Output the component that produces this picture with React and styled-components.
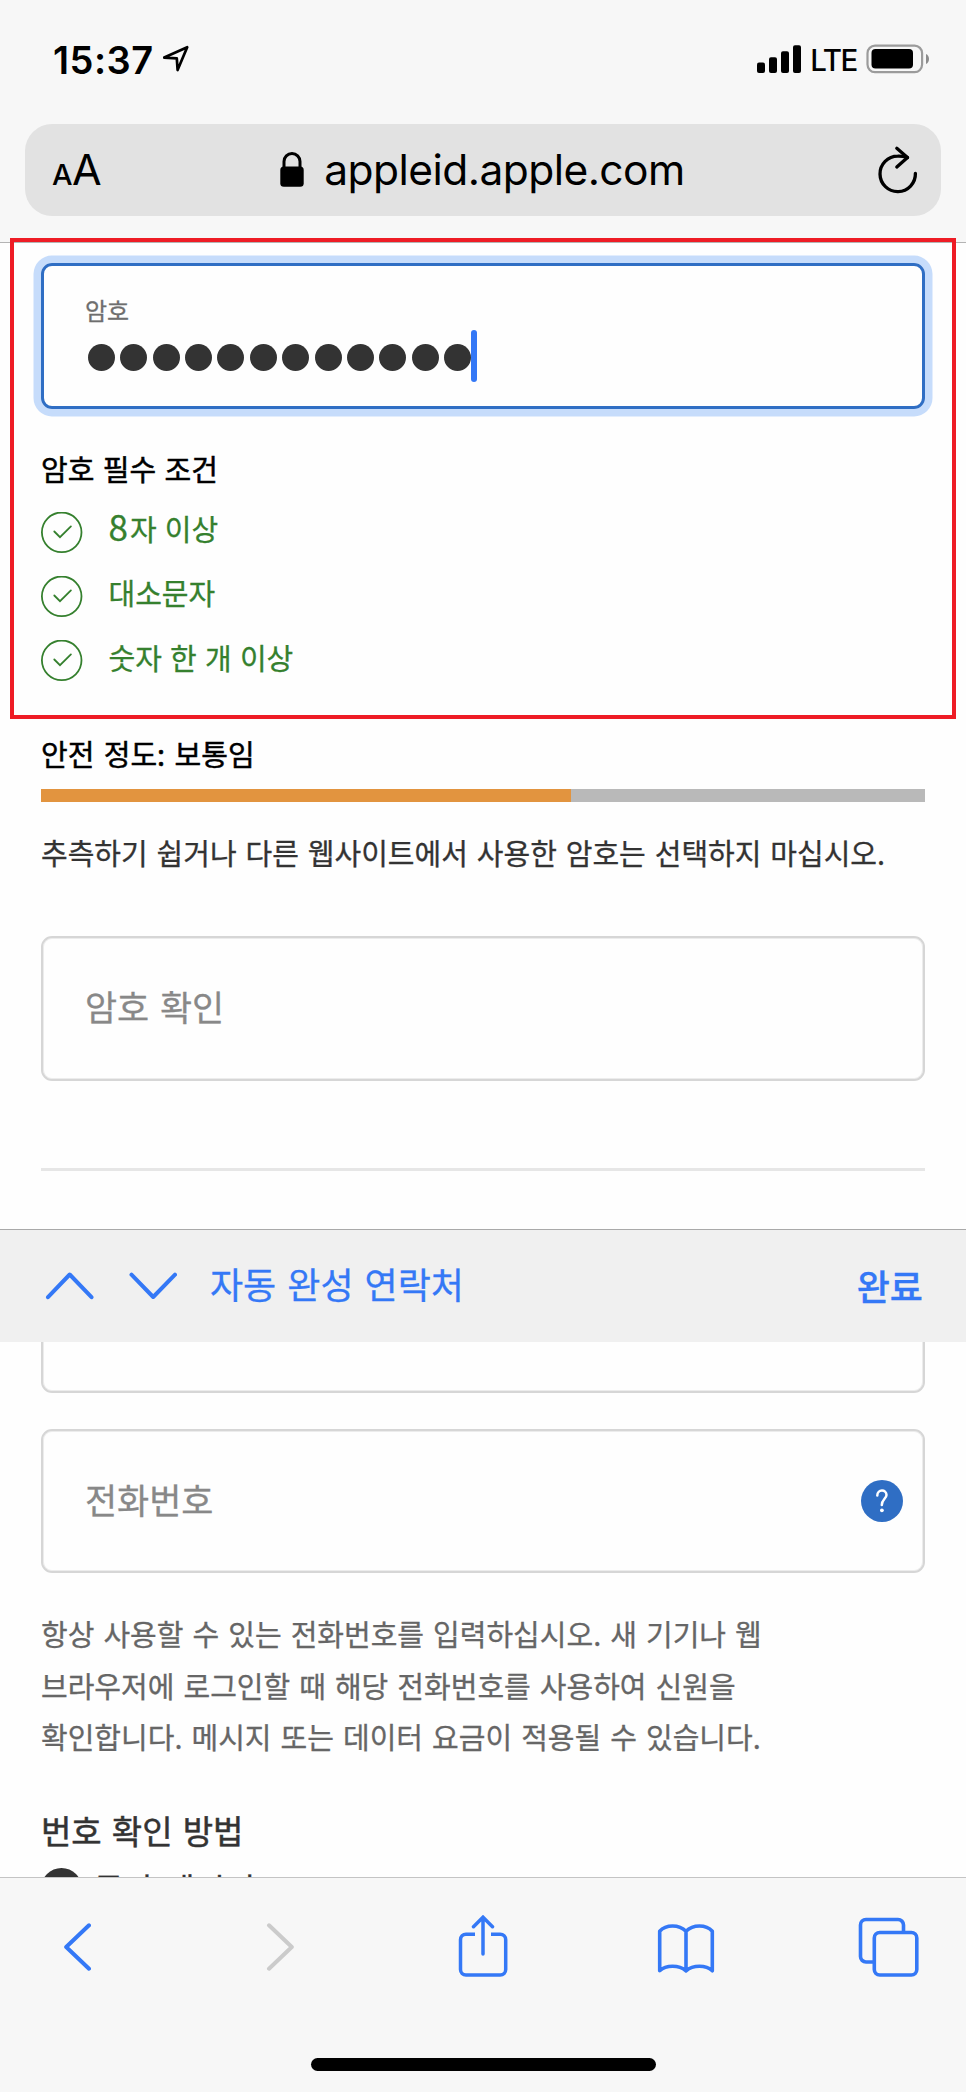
import React from 'react';
import styled, { createGlobalStyle } from 'styled-components';

const blue = '#3478f6';
const fieldBlue = '#2f6ec4';
const green = '#35802e';

const requirements = [
    { id: 'length', digit: '8', text: '자 이상' },
    { id: 'case', text: '대소문자' },
    { id: 'number', text: '숫자 한 개 이상' },
];

const passwordLength = 12;
const strength = 60;

function StatusBar() {
    return (
        <StatusRow>
            <Time>15:37</Time>
            <svg width="28" height="30" viewBox="0 0 28 30">
                <path
                    d="M1.200 13.600 24.200 3.200 14.600 26 13.800 14.400Z"
                    fill="none"
                    stroke="#000"
                    strokeWidth="2.7"
                    strokeLinejoin="round"
                />
            </svg>
            <Spacer />
            <svg width="44" height="28" viewBox="0 0 44 28">
                <rect x="0" y="17.5" width="8" height="10.5" rx="2" />
                <rect x="12" y="12.3" width="8" height="15.7" rx="2" />
                <rect x="24" y="6.3" width="8" height="21.7" rx="2" />
                <rect x="36" y="0.3" width="8" height="27.7" rx="2" />
            </svg>
            <Network>LTE</Network>
            <svg width="64" height="30" viewBox="0 0 64 30">
                <rect
                    x="1.5"
                    y="1.7"
                    width="54.6"
                    height="26.4"
                    rx="7.5"
                    fill="none"
                    stroke="#9b9b9b"
                    strokeWidth="2.2"
                />
                <rect x="5.5" y="5" width="41.5" height="19.6" rx="4" />
                <path d="M60 10c4 1.500 4 8.500 0 10Z" fill="#8c8c8c" />
            </svg>
        </StatusRow>
    );
}

function AddressBar() {
    return (
        <Address>
            <TextSize>
                <small>A</small>A
            </TextSize>
            <Domain>
                <svg width="24" height="36" viewBox="0 0 24 36">
                    <rect x="0.3" y="14.500" width="23.400" height="20.300" rx="3.500" />
                    <path
                        d="M4 16V9.500a8 8 0 0 1 16 0V16"
                        fill="none"
                        stroke="#000"
                        strokeWidth="3"
                    />
                </svg>
                appleid.apple.com
            </Domain>
            <svg width="42" height="50" viewBox="0 0 42 50">
                <g
                    fill="none"
                    stroke="#000"
                    strokeWidth="3.300"
                    strokeLinecap="round"
                    strokeLinejoin="round"
                >
                    <path d="M38.400 28.300A17.700 17.700 0 1 1 20.700 11.200Q25 11 30.500 12.500" />
                    <path d="M19.800 3.300 30.500 12.500 19.800 22" />
                </g>
            </svg>
        </Address>
    );
}

function CheckIcon() {
    return (
        <svg width="42" height="41" viewBox="0 0 42 41">
            <g fill="none" stroke={green} strokeWidth="1.8">
                <circle cx="20.700" cy="20.300" r="19.800" />
                <path d="M13.300 19.500 19 25.200 29.900 14.400" strokeLinecap="round" />
            </g>
        </svg>
    );
}

function PasswordField() {
    return (
        <FocusedField>
            <FieldLabel>암호</FieldLabel>
            <Secret>
                {Array.from({ length: passwordLength }, (_, i) => (
                    <Dot key={i} />
                ))}
                <Caret />
            </Secret>
        </FocusedField>
    );
}

function Chevron({ d, width, height, color = blue }) {
    return (
        <svg width={width} height={height} viewBox={`0 0 ${width} ${height}`}>
            <path
                d={d}
                fill="none"
                stroke={color}
                strokeWidth="4"
                strokeLinecap="round"
                strokeLinejoin="round"
            />
        </svg>
    );
}

function BrowserToolbar() {
    return (
        <Toolbar>
            <ToolbarIcons>
                <Chevron width={28} height={48} d="M26 2.300 3.200 24 26 45.700" />
                <Chevron
                    width={28}
                    height={48}
                    color="#cbcbcb"
                    d="M3 2.300 25.800 24 3 45.700"
                />
                <svg width="50" height="64" viewBox="0 0 50 64">
                    <g fill="none" stroke={blue} strokeWidth="3.500">
                        <path d="M17 19.200H8a5.500 5.500 0 0 0-5.500 5.500V54.500A5.500 5.500 0 0 0 8 60H42.200a5.500 5.500 0 0 0 5.500-5.500V24.700a5.500 5.500 0 0 0-5.500-5.500H33" />
                        <path
                            d="M25 39V3M15.500 11.700 25 2.200 34.500 11.700"
                            strokeLinecap="round"
                        />
                    </g>
                </svg>
                <svg width="58" height="52" viewBox="0 0 58 52">
                    <path
                        d="M29 10.300C22 3.300 9 3.300 2.700 10.300V49.800C9 43.800 22 43.800 29 49.800C36 43.800 49 43.800 55.300 49.800V10.300C49 3.300 36 3.300 29 10.300V49.800"
                        fill="none"
                        stroke={blue}
                        strokeWidth="3.600"
                        strokeLinejoin="round"
                    />
                </svg>
                <svg width="62" height="62" viewBox="0 0 62 62">
                    <g fill="none" stroke={blue} strokeWidth="3.600">
                        <rect x="16.300" y="16.500" width="42.500" height="42.500" rx="5.500" />
                        <path d="M45.500 16.500V9A5.500 5.500 0 0 0 40 3.500H8A5.500 5.500 0 0 0 2.500 9V40.500A5.500 5.500 0 0 0 8 46H16.300" />
                    </g>
                </svg>
            </ToolbarIcons>
            <HomeIndicator />
        </Toolbar>
    );
}

export default function App() {
    return (
        <>
            <GlobalStyle />
            <Screen>
                <Header>
                    <StatusBar />
                    <AddressBar />
                </Header>

                <PasswordSection>
                    <PasswordField />
                    <Heading>암호 필수 조건</Heading>
                    <Requirements>
                        {requirements.map(item => (
                            <Requirement key={item.id}>
                                <CheckIcon />
                                <span>
                                    {item.digit && <Digit>{item.digit}</Digit>}
                                    {item.text}
                                </span>
                            </Requirement>
                        ))}
                    </Requirements>
                    <StrengthHeading>안전 정도: 보통임</StrengthHeading>
                    <StrengthBar>
                        <StrengthFill style={{ width: `${strength}%` }} />
                    </StrengthBar>
                    <Hint>
                        추측하기 쉽거나 다른 웹사이트에서 사용한 암호는 선택하지
                        마십시오.
                    </Hint>
                    <ConfirmField>암호 확인</ConfirmField>
                    <Divider />
                    <Highlight />
                </PasswordSection>

                <FormAccessory>
                    <Chevron width={50} height={30} d="M4 26.200 25.700 3.500 47.500 26.200" />
                    <Chevron width={50} height={30} d="M4.500 3.700 26.200 26 48 3.700" />
                    <AutoFill>자동 완성 연락처</AutoFill>
                    <Done>완료</Done>
                </FormAccessory>

                <PhoneSection>
                    <ClippedField />
                    <PhoneField>
                        전화번호
                        <Help>
                            <svg width="14" height="26" viewBox="0 0 14 26">
                                <path
                                    d="M2.300 7.500C2.300 1 11.500 1 11.500 7C11.500 10.500 6.800 11.500 6.800 17"
                                    fill="none"
                                    stroke="#fff"
                                    strokeWidth="2.500"
                                    strokeLinecap="round"
                                />
                                <circle cx="6.900" cy="22.300" r="1.900" fill="#fff" />
                            </svg>
                        </Help>
                    </PhoneField>
                    <PhoneNote>
                        항상 사용할 수 있는 전화번호를 입력하십시오. 새 기기나 웹
                        <br />
                        브라우저에 로그인할 때 해당 전화번호를 사용하여 신원을
                        <br />
                        확인합니다. 메시지 또는 데이터 요금이 적용될 수 있습니다.
                    </PhoneNote>
                    <MethodHeading>번호 확인 방법</MethodHeading>
                    <Method>
                        <Radio />
                        문자 메시지
                    </Method>
                </PhoneSection>

                <BrowserToolbar />
            </Screen>
        </>
    );
}

// styles

const GlobalStyle = createGlobalStyle`
    * {
        box-sizing: border-box;
        word-spacing: 0.083em;
    }
    body {
        margin: 0;
        background: #fff;
    }
    svg {
        display: block;
        flex-shrink: 0;
    }
`;

const Screen = styled.div`
    display: flex;
    flex-direction: column;
    width: 966px;
    height: 2092px;
    overflow: hidden;
    background: #fefefe;
    color: #000;
    font-family: 'Noto Sans CJK KR', 'Noto Sans', sans-serif;
    font-size: 29px;
    line-height: 40px;
    white-space: nowrap;
    -webkit-text-stroke: 0.3px currentColor;
`;

const Header = styled.header`
    flex: none;
    height: 243px;
    padding: 0 25px;
    background: #f7f7f7;
    border-bottom: 1px solid #b4b4b4;
    font-family: Inter, 'Liberation Sans', sans-serif;
    -webkit-text-stroke: 0;
`;

const StatusRow = styled.div`
    display: flex;
    align-items: center;
    height: 118px;
    padding: 0 11px 0 28px;
`;

const Time = styled.span`
    margin: 1px 9px 0 0;
    font-size: 38px;
    font-weight: 600;
    letter-spacing: 0.5px;
`;

const Spacer = styled.div`
    flex-grow: 1;
`;

const Network = styled.span`
    margin: 2px 9px 0 9px;
    font-size: 29.500px;
    font-weight: 500;
    letter-spacing: -1.400px;
`;

const Address = styled.div`
    display: flex;
    align-items: center;
    justify-content: space-between;
    height: 92px;
    margin-top: 6px;
    padding: 0 22px 0 27px;
    border-radius: 27px;
    background: #e2e2e2;
`;

const TextSize = styled.span`
    width: 60px;
    padding-top: 4px;
    font-size: 43px;
    letter-spacing: -0.5px;
    small {
        font-size: 29px;
        font-weight: 500;
    }
`;

const Domain = styled.div`
    display: flex;
    align-items: center;
    gap: 20px;
    margin-right: 24px;
    font-size: 42.500px;
    letter-spacing: -0.550px;
`;

const PasswordSection = styled.main`
    position: relative;
    flex: none;
    height: 986px;
    padding: 20px 41px 0;
`;

// red outline drawn over the password part of the form
const Highlight = styled.div`
    position: absolute;
    top: -5px;
    left: 10px;
    width: 946px;
    height: 481px;
    border: 4px solid #ee1c25;
`;

const Field = styled.div`
    display: flex;
    align-items: center;
    width: 884px;
    height: 145px;
    padding: 0 20px 5px 42px;
    border: 2px solid #d6d6d6;
    border-radius: 11px;
    box-shadow: inset 0 0 0 1px #ececec;
    color: #888;
    font-size: 34.900px;
`;

const FocusedField = styled(Field)`
    flex-direction: column;
    align-items: flex-start;
    height: 146px;
    padding: 31px 41px 0;
    border: 3px solid ${fieldBlue};
    box-shadow: 0 0 0 7.500px #c6dcfb;
`;

const FieldLabel = styled.label`
    color: #6e6e6e;
    font-size: 24px;
    line-height: 26px;
`;

const Secret = styled.div`
    display: flex;
    align-items: center;
    gap: 5.360px;
    height: 52px;
    margin: 6.500px 0 0 3px;
`;

const Dot = styled.span`
    width: 27px;
    height: 27px;
    margin-top: 4px;
    border-radius: 50%;
    background: #333;
`;

const Caret = styled.span`
    width: 5.500px;
    height: 52px;
    margin-left: -5px;
    border-radius: 3px;
    background: ${blue};
`;

const Heading = styled.h2`
    margin: 39px 0 0;
    font-size: 29px;
    font-weight: 400;
    word-spacing: 0.065em;
    -webkit-text-stroke-width: 0.500px;
`;

const StrengthHeading = styled(Heading)`
    margin-top: 52px;
    word-spacing: 0.1em;
`;

const Requirements = styled.ul`
    display: flex;
    flex-direction: column;
    gap: 24.400px;
    margin: 24px 0 0;
    padding: 0;
    list-style: none;
`;

const Requirement = styled.li`
    display: flex;
    align-items: center;
    gap: 25.500px;
    height: 40px;
    color: ${green};
    span {
        margin-bottom: 8px;
        word-spacing: 0.06em;
    }
`;

const Digit = styled.b`
    margin-right: 2px;
    font-size: 35px;
    font-weight: 400;
    line-height: 1;
`;

const StrengthBar = styled.div`
    height: 13px;
    margin-top: 16.500px;
    background: #b9b9b9;
`;

const StrengthFill = styled.div`
    height: 100%;
    background: #e2943f;
`;

const Hint = styled.p`
    margin: 30px 0 0;
    color: #333;
`;

const ConfirmField = styled(Field)`
    margin-top: 64px;
`;

const Divider = styled.hr`
    height: 3px;
    margin: 87px 0 0;
    border: 0;
    background: #e6e6e6;
`;

const FormAccessory = styled.div`
    display: flex;
    align-items: center;
    flex: none;
    gap: 33px;
    height: 113px;
    padding: 0 43px 0 44px;
    border-top: 1px solid #a9a9a9;
    background: #f0f0f0;
    color: ${blue};
    font-size: 36px;
`;

const AutoFill = styled.span`
    margin-bottom: 7px;
`;

const Done = styled.span`
    margin: 0 0 3px auto;
    font-weight: 500;
`;

const PhoneSection = styled.section`
    flex: none;
    height: 535px;
    padding: 0 41px;
    overflow: hidden;
`;

const ClippedField = styled(Field)`
    margin-top: -94px;
`;

const PhoneField = styled(Field)`
    justify-content: space-between;
    height: 144px;
    margin-top: 36px;
`;

const Help = styled.button`
    display: grid;
    place-items: center;
    width: 42px;
    height: 42px;
    margin-top: 4px;
    padding: 0;
    border: 0;
    border-radius: 50%;
    background: ${fieldBlue};
`;

const PhoneNote = styled.p`
    margin: 35.300px 0 0;
    color: #666;
    line-height: 51.500px;
    word-spacing: 0.088em;
`;

const MethodHeading = styled.h2`
    margin: 47.200px 0 0;
    color: #333;
    font-size: 33px;
    font-weight: 400;
    -webkit-text-stroke-width: 0.500px;
`;

const Method = styled.div`
    display: flex;
    align-items: center;
    gap: 11.500px;
    height: 41px;
    margin-top: 18px;
    color: #333;
    font-size: 33px;
`;

const Radio = styled.span`
    width: 41px;
    height: 41px;
    border-radius: 50%;
    background: #333;
`;

const Toolbar = styled.nav`
    flex: none;
    height: 215px;
    border-top: 1px solid #c4c4c4;
    background: #f7f7f7;
`;

const ToolbarIcons = styled.div`
    display: grid;
    grid-template-columns: repeat(5, 62px);
    align-items: center;
    justify-content: space-between;
    justify-items: center;
    height: 138px;
    padding: 0 46px;
`;

const HomeIndicator = styled.div`
    width: 345px;
    height: 13px;
    margin: 42px auto 0;
    border-radius: 7px;
    background: #000;
`;
